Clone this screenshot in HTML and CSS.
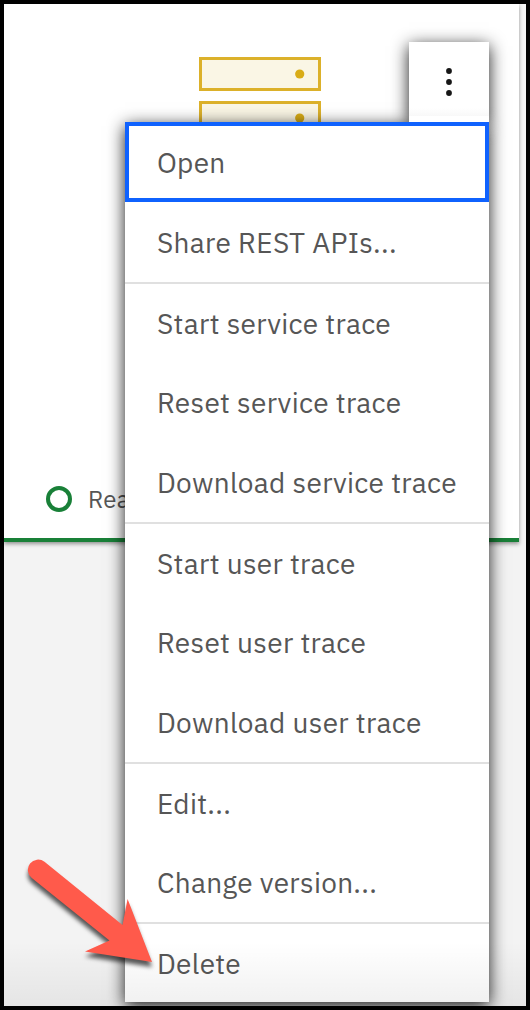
FILE: index.html
```html
<!DOCTYPE html>
<html lang="en">
<head>
<meta charset="utf-8">
<title>Service menu</title>
<link rel="stylesheet" href="styles.css">
</head>
<body>
<main class="frame">
  <section class="card">
    <svg class="server" width="126" height="82" viewBox="0 0 126 82">
      <g fill="#faf6e5" stroke="#dcb12a" stroke-width="3">
        <rect x="3.5" y="3.5" width="119" height="31"/>
        <rect x="3.5" y="47.5" width="119" height="31"/>
      </g>
      <g fill="#d9ac16"><circle cx="102.7" cy="19" r="4.6"/><circle cx="102.7" cy="63" r="4.6"/></g>
    </svg>
    <div class="status"><span class="ring"></span><span class="status-text">Rea</span></div>
  </section>
  <button class="trigger" aria-label="Menu">
    <svg width="8" height="30" viewBox="0 0 8 30" fill="#161616"><circle cx="4" cy="4" r="2.9"/><circle cx="4" cy="15" r="2.9"/><circle cx="4" cy="26" r="2.9"/></svg>
  </button>
  <ul class="menu">
    <li class="item focused">Open</li>
    <li class="item">Share REST APIs...</li>
    <li class="item divided">Start service trace</li>
    <li class="item">Reset service trace</li>
    <li class="item">Download service trace</li>
    <li class="item divided">Start user trace</li>
    <li class="item">Reset user trace</li>
    <li class="item">Download user trace</li>
    <li class="item divided">Edit...</li>
    <li class="item">Change version...</li>
    <li class="item divided">Delete</li>
  </ul>
  <div class="fade"></div>
  <svg class="arrow" width="150" height="130" viewBox="10 850 150 130">
    <path d="M44.5 861.8 L122.5 925 L127.6 899 L152 962 L85 951.5 L109.5 940.5 L31.8 878 A10.2 10.2 0 0 1 44.5 861.8Z" fill="#ff5a4b"/>
  </svg>
</main>
</body>
</html>
```
FILE: styles.css
```css
* { box-sizing: border-box; }
body { margin: 0; font-family: "IBM Plex Sans", Roboto, sans-serif; color: #565656; }
.frame { position: relative; width: 530px; height: 1010px; border: 4px solid #000; background: #f3f3f3; overflow: hidden; }
.card { width: 515px; height: 538px; padding: 51px 0 0 41px; background: #fff; border-bottom: 4px solid #198038; box-shadow: 0 2px 4px rgba(0,0,0,.4); display: flex; flex-direction: column; justify-content: space-between; }
.server { margin-left: 152px; filter: blur(.6px); }
.status { display: flex; align-items: center; height: 28px; margin-bottom: 25px; padding-left: 1px; }
.ring { width: 26px; height: 26px; border: 4px solid #198038; border-radius: 50%; }
.status-text { margin-left: 16px; font-size: 24px; line-height: 28px; letter-spacing: .3px; }
.trigger { position: absolute; left: 405px; top: 38px; width: 80px; height: 80px; padding: 0; border: 0; background: linear-gradient(#fff 66px, #f8f8f8 74px, #fff 74px); box-shadow: 0 4px 16px rgba(0,0,0,.9); display: flex; align-items: center; justify-content: center; }
.menu { position: absolute; left: 121px; top: 118px; width: 364px; margin: 0; padding: 0; list-style: none; background: #fff; box-shadow: 0 4px 16px rgba(0,0,0,.9); }
.trigger::before { content: ""; position: absolute; z-index: 1; left: 0; bottom: 0; width: 80px; height: 6px; background: #fff; }
/* Covers the menu's shadow where the trigger meets it. */
.menu::before { content: ""; position: absolute; right: 0; top: -6px; width: 80px; height: 6px; background: #fff; }
.menu { clip-path: polygon(-30px -30px, 284px -30px, 284px -6px, 364px -6px, 364px -30px, 400px -30px, 400px 920px, -30px 920px); }
.item { display: flex; align-items: center; height: 80px; padding: 2px 32px 0; font-size: 28px; line-height: 36px; letter-spacing: .3px; white-space: nowrap; }
.focused { border: 4px solid #0f62fe; padding: 2px 28px 0; }
.divided { border-top: 2px solid #e0e0e0; }
.fade { position: absolute; left: 0; right: 0; bottom: 0; height: 64px; background: linear-gradient(rgba(0,0,0,0), rgba(0,0,0,.06)); }
.arrow { position: absolute; left: 6px; top: 846px; filter: drop-shadow(0 5px 2px rgba(0,0,0,.65)); }
```
